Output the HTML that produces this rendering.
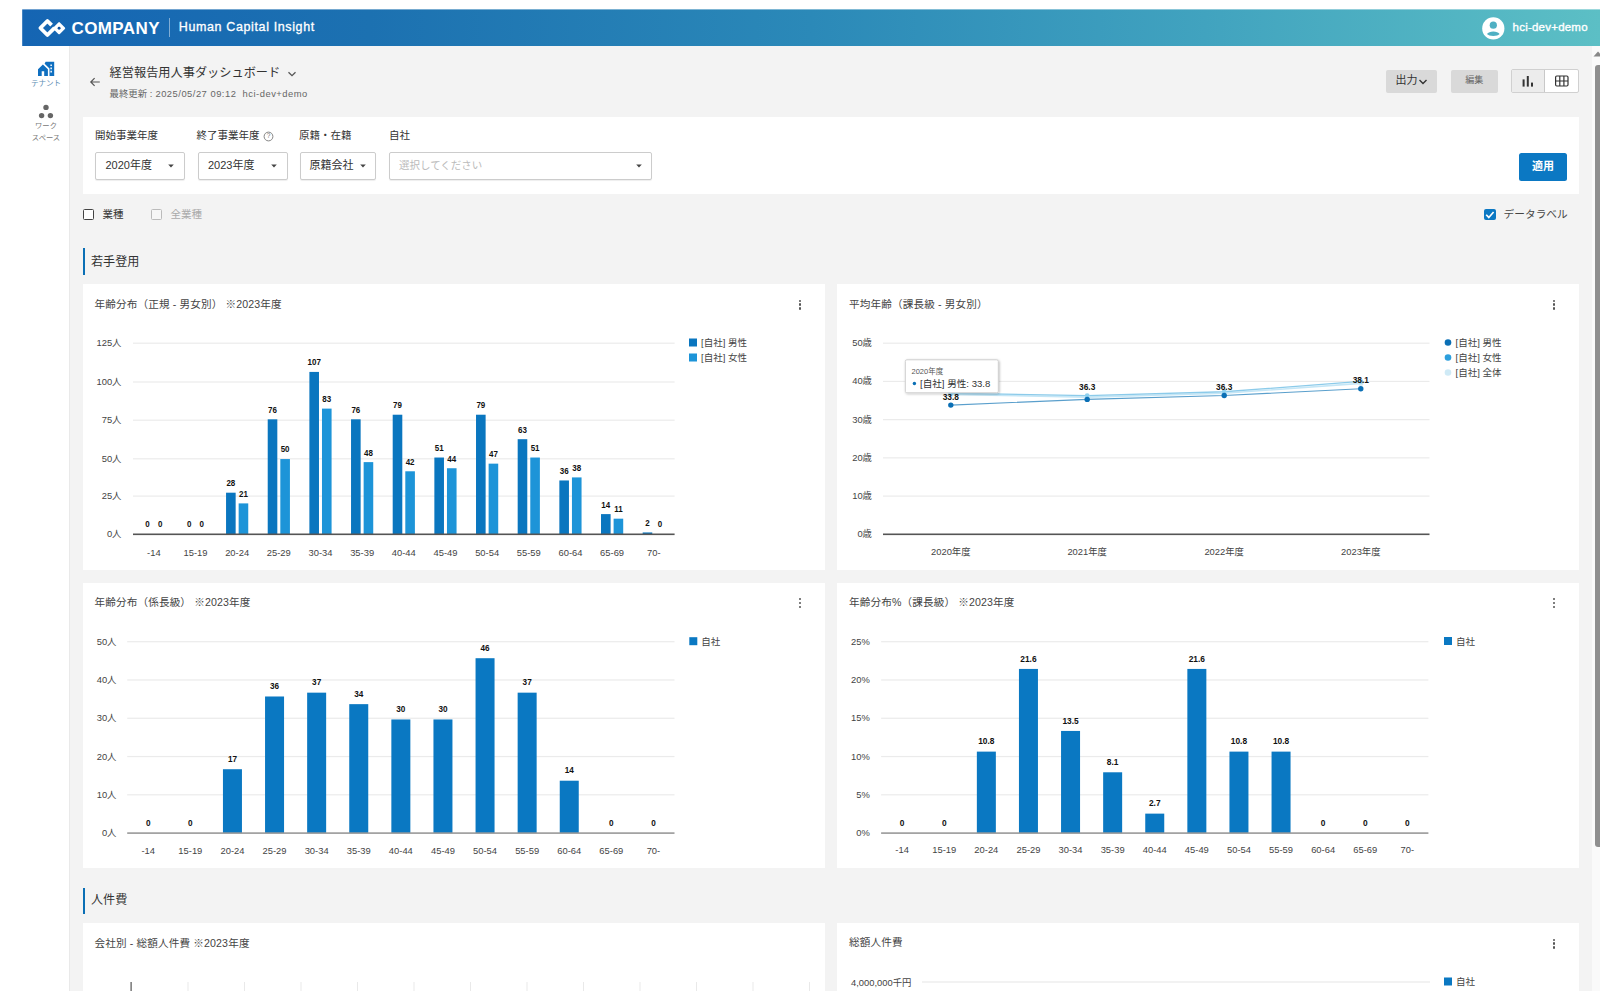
<!DOCTYPE html>
<html lang="ja">
<head>
<meta charset="utf-8">
<title>経営報告用人事ダッシュボード</title>
<style>
*{box-sizing:border-box;margin:0;padding:0}
html,body{width:1600px;height:991px;overflow:hidden;background:#fff}
body{font-family:"Liberation Sans", "Noto Sans CJK JP", sans-serif;color:#333;position:relative;font-size:11px}
.abs,.ch{position:absolute}
.side{left:22px;top:46px;width:48px;height:945px;background:#fff;border-right:1px solid #e9e9e9}
.main{left:70px;top:46px;width:1522px;height:945px;background:#f3f3f3}
.sb{left:1592px;top:46px;width:8px;height:945px;background:#fafafa}
.thumb{left:1594.5px;top:65px;width:5.5px;height:782px;background:#8f8f8f;border-radius:3px 0 0 3px}
.card{background:#fff}
.t{white-space:nowrap;line-height:1}
svg text{font-family:"Liberation Sans", "Noto Sans CJK JP", sans-serif}
.ax{font-size:9.4px;fill:#444}
.dl{font-size:9.3px;font-weight:bold;fill:#111}
.lg{font-size:9.5px;fill:#444}
.tt1{font-size:7.5px;fill:#555}
.tt2{font-size:9.6px;fill:#333}
.sel{background:#fff;border:1px solid #ccc;border-radius:2px;height:28px;box-shadow:0 1px 1px rgba(0,0,0,.07)}
.kb{width:3px}
.kb i{display:block;width:2.4px;height:2.4px;border-radius:50%;background:#555;margin-bottom:1.6px}
</style>
</head>
<body>
<svg width="0" height="0" style="position:absolute"><defs><filter id="sh" x="-10%" y="-20%" width="125%" height="150%"><feDropShadow dx="0.8" dy="0.8" stdDeviation="1" flood-color="#000" flood-opacity="0.25"/></filter></defs></svg>
<svg class="abs" style="left:0;top:0" width="1600" height="56" viewBox="0 0 1600 56"><defs><linearGradient id="hg" x1="0" y1="0" x2="1" y2="0"><stop offset="0" stop-color="#1565b3"/><stop offset="0.22" stop-color="#1c71b1"/><stop offset="0.5" stop-color="#2b89b8"/><stop offset="0.75" stop-color="#41a3bf"/><stop offset="1" stop-color="#5cbfc5"/></linearGradient></defs><rect x="22.2" y="9.4" width="1577.8" height="36.7" fill="url(#hg)"/></svg>
<svg class="abs" style="left:36px;top:14px" width="32" height="28" viewBox="36 14 32 28"><path d="M51.6 25.2 L47.4 21 L40.4 28 L47.4 35 L54.6 27.8" fill="none" stroke="#fff" stroke-width="3.8" stroke-linejoin="round" stroke-linecap="butt"/><path d="M59.1 23.2 L64.1 28.2 L59.1 33.2 L54.1 28.2 Z" fill="#fff" stroke="#fff" stroke-width="2.2" stroke-linejoin="round"/><circle cx="59.1" cy="28.3" r="1.45" fill="#0d4f9e"/></svg>
<div class="abs t" style="left:71.5px;top:20px;font-size:17px;font-weight:bold;color:#fff;letter-spacing:.4px">COMPANY</div>
<div class="abs" style="left:169px;top:18px;width:1px;height:19px;background:rgba(255,255,255,.45)"></div>
<div class="abs t" style="left:178.8px;top:21px;font-size:12.5px;color:#fff;letter-spacing:.62px;-webkit-text-stroke:.3px #fff">Human Capital Insight</div>
<svg class="abs" style="left:1481px;top:15.5px" width="25" height="25" viewBox="0 0 25 25"><circle cx="12.3" cy="12.4" r="11.1" fill="#fff"/><circle cx="12.3" cy="9.2" r="3.6" fill="#4fb0c3"/><path d="M6 18 C7.8 14.6 16.8 14.6 18.6 18 C16.8 20.6 7.8 20.6 6 18Z" fill="#4fb0c3"/></svg>
<div class="abs t" style="left:1512.6px;top:21.5px;font-size:11.5px;color:#fff;letter-spacing:.22px;-webkit-text-stroke:.35px #fff">hci-dev+demo</div>

<div class="abs side"></div>
<div class="abs main"></div>
<div class="abs sb"></div>
<div class="abs thumb"></div>
<svg class="abs" style="left:1592px;top:50px" width="8" height="8" viewBox="0 0 8 8"><path d="M1.5 6.5 L6 1.5 L8 3.5 L8 6.5Z" fill="#888"/></svg>

<!-- sidebar icons -->
<svg class="abs" style="left:36px;top:60px" width="20" height="18" viewBox="36 60 20 18"><path d="M38 69.3 L42.9 64.5 L47.9 69.3 V76 H44.2 V71.3 H41.7 V76 H38 Z" fill="#0f6fc0"/><path d="M45.6 61.8 H54.2 V76 H49.5 V68.5 L44.6 63.7 Z M50.4 64.4 h1.5 v1.6 h-1.5z M50.4 67.6 h1.5 v1.6 h-1.5z M50.4 70.8 h1.5 v1.6 h-1.5z" fill="#0f6fc0" fill-rule="evenodd"/></svg>
<div class="abs t" style="left:22px;top:79.6px;width:48px;text-align:center;font-size:7.5px;color:#5f8fb5">テナント</div>
<svg class="abs" style="left:37px;top:104px" width="18" height="16" viewBox="0 0 18 16"><circle cx="9" cy="3.4" r="2.7" fill="#666"/><circle cx="4.6" cy="11.6" r="2.7" fill="#666"/><circle cx="13.4" cy="11.6" r="2.7" fill="#666"/></svg>
<div class="abs t" style="left:22px;top:122.3px;width:48px;text-align:center;font-size:7.3px;color:#777">ワーク</div>
<div class="abs t" style="left:22px;top:134.2px;width:48px;text-align:center;font-size:7.3px;color:#777">スペース</div>

<!-- title row -->
<svg class="abs" style="left:89px;top:76px" width="12" height="12" viewBox="0 0 12 12"><path d="M10.8 6 H2 M5.6 2.2 L1.8 6 L5.6 9.8" fill="none" stroke="#555" stroke-width="1.2"/></svg>
<div class="abs t" style="left:109.6px;top:67px;font-size:12.2px;color:#333">経営報告用人事ダッシュボード</div>
<svg class="abs" style="left:287px;top:70px" width="10" height="8" viewBox="0 0 10 8"><path d="M1.5 2.2 L5 5.6 L8.5 2.2" fill="none" stroke="#555" stroke-width="1.3"/></svg>
<div class="abs t" style="left:109.6px;top:89.2px;font-size:9.4px;color:#666">最終更新 :<span style="letter-spacing:.5px"> 2025/05/27 09:12&nbsp; hci-dev+demo</span></div>

<!-- top-right buttons -->
<div class="abs" style="left:1386px;top:69.5px;width:51px;height:23.5px;background:#d9d9d9;border-radius:2px"></div>
<div class="abs t" style="left:1395.5px;top:75px;font-size:11px;color:#333">出力</div>
<svg class="abs" style="left:1418px;top:78px" width="10" height="8" viewBox="0 0 10 8"><path d="M1.5 2 L5 5.5 L8.5 2" fill="none" stroke="#333" stroke-width="1.4"/></svg>
<div class="abs" style="left:1450.5px;top:69.5px;width:47.5px;height:23.5px;background:#d9d9d9;border-radius:2px"></div>
<div class="abs t" style="left:1450.5px;top:76px;width:47.5px;text-align:center;font-size:9px;color:#666">編集</div>
<div class="abs" style="left:1511px;top:68.5px;width:67.5px;height:24.5px;background:#fff;border:1px solid #d0d0d0;border-radius:2px"></div>
<div class="abs" style="left:1512px;top:69.5px;width:32.5px;height:22.5px;background:#ececec;border-right:1px solid #c8c8c8"></div>
<svg class="abs" style="left:1521px;top:75px" width="14" height="13" viewBox="0 0 14 13"><rect x="1.6" y="4.4" width="2" height="7.2" fill="#333"/><rect x="5.8" y="1" width="2" height="10.6" fill="#333"/><rect x="10" y="7.6" width="2" height="4" fill="#333"/></svg>
<svg class="abs" style="left:1554px;top:74px" width="16" height="14" viewBox="0 0 16 14"><rect x="1.6" y="2" width="12.4" height="10" rx="1.2" fill="none" stroke="#333" stroke-width="1.2"/><path d="M1.6 7 H14 M5.8 2 V12 M9.9 2 V12" stroke="#333" stroke-width="1.2" fill="none"/></svg>

<!-- filter panel -->
<div class="abs card" style="left:83px;top:116.5px;width:1496px;height:77.5px"></div>
<div class="abs t" style="left:95px;top:129.5px;font-size:10.5px;color:#333">開始事業年度</div>
<div class="abs t" style="left:196.5px;top:129.5px;font-size:10.5px;color:#333">終了事業年度</div>
<svg class="abs" style="left:263px;top:130.5px" width="11" height="11" viewBox="0 0 11 11"><circle cx="5.5" cy="5.5" r="4.4" fill="none" stroke="#777" stroke-width="0.9"/></svg>
<div class="abs t" style="left:263px;top:132.5px;width:11px;text-align:center;font-size:6.5px;color:#777">?</div>
<div class="abs t" style="left:299px;top:129.5px;font-size:10.5px;color:#333">原籍・在籍</div>
<div class="abs t" style="left:389px;top:129.5px;font-size:10.5px;color:#333">自社</div>

<div class="abs sel" style="left:95px;top:151.5px;width:90px"></div>
<div class="abs t" style="left:105.5px;top:159.5px;font-size:11px;color:#333">2020年度</div>
<div class="abs sel" style="left:197.5px;top:151.5px;width:90px"></div>
<div class="abs t" style="left:208px;top:159.5px;font-size:11px;color:#333">2023年度</div>
<div class="abs sel" style="left:299.5px;top:151.5px;width:76px"></div>
<div class="abs t" style="left:309.5px;top:159.5px;font-size:11px;color:#333">原籍会社</div>
<div class="abs sel" style="left:389px;top:151.5px;width:263px"></div>
<div class="abs t" style="left:399px;top:159.5px;font-size:10.5px;color:#bbb">選択してください</div>
<svg class="abs" style="left:167px;top:163px" width="8" height="6" viewBox="0 0 8 6"><path d="M1.2 1.5 H6.8 L4 4.6Z" fill="#444"/></svg>
<svg class="abs" style="left:270px;top:163px" width="8" height="6" viewBox="0 0 8 6"><path d="M1.2 1.5 H6.8 L4 4.6Z" fill="#444"/></svg>
<svg class="abs" style="left:359px;top:163px" width="8" height="6" viewBox="0 0 8 6"><path d="M1.2 1.5 H6.8 L4 4.6Z" fill="#444"/></svg>
<svg class="abs" style="left:635px;top:163px" width="8" height="6" viewBox="0 0 8 6"><path d="M1.2 1.5 H6.8 L4 4.6Z" fill="#444"/></svg>
<div class="abs" style="left:1519px;top:152.5px;width:48px;height:28.5px;background:#0b78c3;border-radius:2.5px"></div>
<div class="abs t" style="left:1519px;top:161px;width:48px;text-align:center;font-size:11px;font-weight:bold;color:#fff">適用</div>

<!-- checkbox row -->
<div class="abs" style="left:82.5px;top:208.5px;width:11px;height:11px;border:1.3px solid #444;border-radius:1.5px;background:#fff"></div>
<div class="abs t" style="left:102.5px;top:208.5px;font-size:10.5px;color:#333">業種</div>
<div class="abs" style="left:151px;top:209px;width:10.5px;height:10.5px;border:1px solid #bbb;border-radius:1.5px;background:#f6f6f6"></div>
<div class="abs t" style="left:170.5px;top:208.5px;font-size:10.5px;color:#aaa">全業種</div>
<div class="abs" style="left:1484px;top:208.5px;width:11.5px;height:11.5px;border-radius:2px;background:#0b78c3"></div>
<svg class="abs" style="left:1484px;top:208.5px" width="11.5" height="11.5" viewBox="0 0 12 12"><path d="M2.3 6 L5 8.8 L10 3.2" fill="none" stroke="#fff" stroke-width="1.7"/></svg>
<div class="abs t" style="left:1503.6px;top:208.5px;font-size:10.7px;color:#444">データラベル</div>

<!-- section 1 -->
<div class="abs" style="left:82.5px;top:248px;width:2.5px;height:27px;background:#0a6fb5"></div>
<div class="abs t" style="left:91px;top:255.8px;font-size:12.1px;color:#333">若手登用</div>

<div class="abs card" style="left:83px;top:284px;width:742px;height:286px"></div>
<div class="abs card" style="left:837px;top:284px;width:742px;height:286px"></div>
<div class="abs card" style="left:83px;top:582.5px;width:742px;height:285.5px"></div>
<div class="abs card" style="left:837px;top:582.5px;width:742px;height:285.5px"></div>
<div class="abs t" style="left:94.5px;top:298.5px;font-size:10.6px;letter-spacing:.14px;color:#444">年齢分布（正規 - 男女別） ※2023年度</div>
<div class="abs t" style="left:849px;top:298.5px;font-size:10.6px;letter-spacing:.14px;color:#444">平均年齢（課長級 - 男女別）</div>
<div class="abs t" style="left:94.5px;top:597px;font-size:10.6px;letter-spacing:.14px;color:#444">年齢分布（係長級） ※2023年度</div>
<div class="abs t" style="left:849px;top:597px;font-size:10.6px;letter-spacing:.14px;color:#444">年齢分布%（課長級） ※2023年度</div>
<div class="abs kb" style="left:798.6px;top:299.5px"><i></i><i></i><i></i></div>
<div class="abs kb" style="left:1552.8px;top:299.5px"><i></i><i></i><i></i></div>
<div class="abs kb" style="left:798.6px;top:598px"><i></i><i></i><i></i></div>
<div class="abs kb" style="left:1552.8px;top:598px"><i></i><i></i><i></i></div>
<svg class="ch" style="left:83px;top:320px" width="742" height="250" viewBox="83 320 742 250">
<text class="ax" x="121.5" y="537" text-anchor="end">0人</text>
<rect x="133.0" y="495.50" width="541.60" height="1.2" fill="#ebebeb"/>
<text class="ax" x="121.5" y="499" text-anchor="end">25人</text>
<rect x="133.0" y="458.20" width="541.60" height="1.2" fill="#ebebeb"/>
<text class="ax" x="121.5" y="462" text-anchor="end">50人</text>
<rect x="133.0" y="419.60" width="541.60" height="1.2" fill="#ebebeb"/>
<text class="ax" x="121.5" y="423" text-anchor="end">75人</text>
<rect x="133.0" y="381.40" width="541.60" height="1.2" fill="#ebebeb"/>
<text class="ax" x="121.5" y="385" text-anchor="end">100人</text>
<rect x="133.0" y="342.60" width="541.60" height="1.2" fill="#ebebeb"/>
<text class="ax" x="121.5" y="346" text-anchor="end">125人</text>
<text class="ax" x="153.83" y="555.8" text-anchor="middle">-14</text>
<text class="dl" transform="translate(147.53,527.00) scale(0.86,1)" text-anchor="middle">0</text>
<text class="dl" transform="translate(160.13,527.00) scale(0.86,1)" text-anchor="middle">0</text>
<text class="ax" x="195.49" y="555.8" text-anchor="middle">15-19</text>
<text class="dl" transform="translate(189.19,527.00) scale(0.86,1)" text-anchor="middle">0</text>
<text class="dl" transform="translate(201.79,527.00) scale(0.86,1)" text-anchor="middle">0</text>
<text class="ax" x="237.15" y="555.8" text-anchor="middle">20-24</text>
<rect x="226.05" y="492.69" width="9.6" height="41.61" fill="#0a76bf"/>
<text class="dl" transform="translate(230.85,486.09) scale(0.86,1)" text-anchor="middle">28</text>
<rect x="238.65" y="503.40" width="9.6" height="30.90" fill="#1d94d8"/>
<text class="dl" transform="translate(243.45,496.80) scale(0.86,1)" text-anchor="middle">21</text>
<text class="ax" x="278.82" y="555.8" text-anchor="middle">25-29</text>
<rect x="267.72" y="419.31" width="9.6" height="114.99" fill="#0a76bf"/>
<text class="dl" transform="translate(272.52,412.71) scale(0.86,1)" text-anchor="middle">76</text>
<rect x="280.32" y="459.06" width="9.6" height="75.24" fill="#1d94d8"/>
<text class="dl" transform="translate(285.12,452.46) scale(0.86,1)" text-anchor="middle">50</text>
<text class="ax" x="320.48" y="555.8" text-anchor="middle">30-34</text>
<rect x="309.38" y="371.92" width="9.6" height="162.38" fill="#0a76bf"/>
<text class="dl" transform="translate(314.18,365.32) scale(0.86,1)" text-anchor="middle">107</text>
<rect x="321.98" y="408.61" width="9.6" height="125.69" fill="#1d94d8"/>
<text class="dl" transform="translate(326.78,402.01) scale(0.86,1)" text-anchor="middle">83</text>
<text class="ax" x="362.14" y="555.8" text-anchor="middle">35-39</text>
<rect x="351.04" y="419.31" width="9.6" height="114.99" fill="#0a76bf"/>
<text class="dl" transform="translate(355.84,412.71) scale(0.86,1)" text-anchor="middle">76</text>
<rect x="363.64" y="462.12" width="9.6" height="72.18" fill="#1d94d8"/>
<text class="dl" transform="translate(368.44,455.52) scale(0.86,1)" text-anchor="middle">48</text>
<text class="ax" x="403.80" y="555.8" text-anchor="middle">40-44</text>
<rect x="392.70" y="414.72" width="9.6" height="119.58" fill="#0a76bf"/>
<text class="dl" transform="translate(397.50,408.12) scale(0.86,1)" text-anchor="middle">79</text>
<rect x="405.30" y="471.29" width="9.6" height="63.01" fill="#1d94d8"/>
<text class="dl" transform="translate(410.10,464.69) scale(0.86,1)" text-anchor="middle">42</text>
<text class="ax" x="445.46" y="555.8" text-anchor="middle">45-49</text>
<rect x="434.36" y="457.53" width="9.6" height="76.77" fill="#0a76bf"/>
<text class="dl" transform="translate(439.16,450.93) scale(0.86,1)" text-anchor="middle">51</text>
<rect x="446.96" y="468.23" width="9.6" height="66.07" fill="#1d94d8"/>
<text class="dl" transform="translate(451.76,461.63) scale(0.86,1)" text-anchor="middle">44</text>
<text class="ax" x="487.12" y="555.8" text-anchor="middle">50-54</text>
<rect x="476.02" y="414.72" width="9.6" height="119.58" fill="#0a76bf"/>
<text class="dl" transform="translate(480.82,408.12) scale(0.86,1)" text-anchor="middle">79</text>
<rect x="488.62" y="463.65" width="9.6" height="70.65" fill="#1d94d8"/>
<text class="dl" transform="translate(493.42,457.05) scale(0.86,1)" text-anchor="middle">47</text>
<text class="ax" x="528.78" y="555.8" text-anchor="middle">55-59</text>
<rect x="517.68" y="439.19" width="9.6" height="95.11" fill="#0a76bf"/>
<text class="dl" transform="translate(522.48,432.59) scale(0.86,1)" text-anchor="middle">63</text>
<rect x="530.28" y="457.53" width="9.6" height="76.77" fill="#1d94d8"/>
<text class="dl" transform="translate(535.08,450.93) scale(0.86,1)" text-anchor="middle">51</text>
<text class="ax" x="570.45" y="555.8" text-anchor="middle">60-64</text>
<rect x="559.35" y="480.46" width="9.6" height="53.84" fill="#0a76bf"/>
<text class="dl" transform="translate(564.15,473.86) scale(0.86,1)" text-anchor="middle">36</text>
<rect x="571.95" y="477.41" width="9.6" height="56.89" fill="#1d94d8"/>
<text class="dl" transform="translate(576.75,470.81) scale(0.86,1)" text-anchor="middle">38</text>
<text class="ax" x="612.11" y="555.8" text-anchor="middle">65-69</text>
<rect x="601.01" y="514.10" width="9.6" height="20.20" fill="#0a76bf"/>
<text class="dl" transform="translate(605.81,507.50) scale(0.86,1)" text-anchor="middle">14</text>
<rect x="613.61" y="518.68" width="9.6" height="15.62" fill="#1d94d8"/>
<text class="dl" transform="translate(618.41,512.08) scale(0.86,1)" text-anchor="middle">11</text>
<text class="ax" x="653.77" y="555.8" text-anchor="middle">70-</text>
<rect x="642.67" y="532.44" width="9.6" height="1.86" fill="#0a76bf"/>
<text class="dl" transform="translate(647.47,525.84) scale(0.86,1)" text-anchor="middle">2</text>
<text class="dl" transform="translate(660.07,527.00) scale(0.86,1)" text-anchor="middle">0</text>
<rect x="133.0" y="533.5" width="541.60" height="1.6" fill="#555"/>
<rect x="689" y="338.5" width="8" height="8" fill="#0a76bf"/>
<text class="lg" x="701" y="346.1">[自社] 男性</text>
<rect x="689" y="353.5" width="8" height="8" fill="#1d94d8"/>
<text class="lg" x="701" y="361.1">[自社] 女性</text>
</svg>
<svg class="ch" style="left:837px;top:320px" width="742" height="250" viewBox="837 320 742 250">
<text class="ax" x="872" y="537" text-anchor="end">0歳</text>
<rect x="883" y="495.48" width="546.5" height="1.2" fill="#ebebeb"/>
<text class="ax" x="872" y="499" text-anchor="end">10歳</text>
<rect x="883" y="457.26" width="546.5" height="1.2" fill="#ebebeb"/>
<text class="ax" x="872" y="461" text-anchor="end">20歳</text>
<rect x="883" y="419.04" width="546.5" height="1.2" fill="#ebebeb"/>
<text class="ax" x="872" y="423" text-anchor="end">30歳</text>
<rect x="883" y="380.82" width="546.5" height="1.2" fill="#ebebeb"/>
<text class="ax" x="872" y="384" text-anchor="end">40歳</text>
<rect x="883" y="342.60" width="546.5" height="1.2" fill="#ebebeb"/>
<text class="ax" x="872" y="346" text-anchor="end">50歳</text>
<text class="ax" x="950.80" y="555.3" text-anchor="middle">2020年度</text>
<text class="ax" x="1087.20" y="555.3" text-anchor="middle">2021年度</text>
<text class="ax" x="1224.20" y="555.3" text-anchor="middle">2022年度</text>
<text class="ax" x="1360.80" y="555.3" text-anchor="middle">2023年度</text>
<polyline points="950.80,394.41 1087.20,397.09 1224.20,393.27 1360.80,383.33" fill="none" stroke="#c4e6f6" stroke-width="1.6"/>
<polyline points="950.80,393.27 1087.20,395.56 1224.20,391.74 1360.80,381.42" fill="none" stroke="#8ccbea" stroke-width="1.3"/>
<polyline points="950.80,405.12 1087.20,399.38 1224.20,395.56 1360.80,388.68" fill="none" stroke="#5a9fcc" stroke-width="1.1"/>
<circle cx="950.80" cy="394.41" r="2.6" fill="#cfeaf6"/>
<circle cx="1087.20" cy="397.09" r="2.6" fill="#cfeaf6"/>
<circle cx="1224.20" cy="393.27" r="2.6" fill="#cfeaf6"/>
<circle cx="1360.80" cy="383.33" r="2.6" fill="#cfeaf6"/>
<circle cx="950.80" cy="393.27" r="2.4" fill="#8fd0ee"/>
<circle cx="1087.20" cy="395.56" r="2.4" fill="#8fd0ee"/>
<circle cx="1224.20" cy="391.74" r="2.4" fill="#8fd0ee"/>
<circle cx="1360.80" cy="381.42" r="2.4" fill="#8fd0ee"/>
<circle cx="950.80" cy="405.12" r="2.7" fill="#0a6fb5"/>
<circle cx="1087.20" cy="399.38" r="2.7" fill="#0a6fb5"/>
<circle cx="1224.20" cy="395.56" r="2.7" fill="#0a6fb5"/>
<circle cx="1360.80" cy="388.68" r="2.7" fill="#0a6fb5"/>
<text class="dl" transform="translate(950.80,399.52) scale(0.9,1)" text-anchor="middle">33.8</text>
<text class="dl" transform="translate(1087.20,389.96) scale(0.9,1)" text-anchor="middle">36.3</text>
<text class="dl" transform="translate(1224.20,389.96) scale(0.9,1)" text-anchor="middle">36.3</text>
<text class="dl" transform="translate(1360.80,383.08) scale(0.9,1)" text-anchor="middle">38.1</text>
<rect x="883" y="533.5" width="546.5" height="1.6" fill="#555"/>
<circle cx="1448" cy="342.5" r="3.3" fill="#0a6fb5"/>
<text class="lg" x="1455.5" y="346.1">[自社] 男性</text>
<circle cx="1448" cy="357.5" r="3.3" fill="#2d9fdd"/>
<text class="lg" x="1455.5" y="361.1">[自社] 女性</text>
<circle cx="1448" cy="372.5" r="3.3" fill="#cfeaf6"/>
<text class="lg" x="1455.5" y="376.1">[自社] 全体</text>
<rect x="905.3" y="359.8" width="93" height="33" rx="1.5" fill="#fff" stroke="#cfcfcf" stroke-width="1" filter="url(#sh)"/>
<text class="tt1" x="911.5" y="374">2020年度</text>
<circle cx="914.4" cy="383.5" r="1.7" fill="#0a6fb5"/>
<text class="tt2" x="920" y="386.8">[自社] 男性: 33.8</text>
</svg>
<svg class="ch" style="left:83px;top:618px" width="742" height="250" viewBox="83 618 742 250">
<text class="ax" x="116.5" y="836" text-anchor="end">0人</text>
<rect x="127.2" y="794.22" width="547.30" height="1.2" fill="#ebebeb"/>
<text class="ax" x="116.5" y="798" text-anchor="end">10人</text>
<rect x="127.2" y="755.94" width="547.30" height="1.2" fill="#ebebeb"/>
<text class="ax" x="116.5" y="760" text-anchor="end">20人</text>
<rect x="127.2" y="717.66" width="547.30" height="1.2" fill="#ebebeb"/>
<text class="ax" x="116.5" y="721" text-anchor="end">30人</text>
<rect x="127.2" y="679.38" width="547.30" height="1.2" fill="#ebebeb"/>
<text class="ax" x="116.5" y="683" text-anchor="end">40人</text>
<rect x="127.2" y="641.10" width="547.30" height="1.2" fill="#ebebeb"/>
<text class="ax" x="116.5" y="645" text-anchor="end">50人</text>
<text class="ax" x="148.25" y="853.5" text-anchor="middle">-14</text>
<text class="dl" transform="translate(148.25,825.80) scale(0.88,1)" text-anchor="middle">0</text>
<text class="ax" x="190.35" y="853.5" text-anchor="middle">15-19</text>
<text class="dl" transform="translate(190.35,825.80) scale(0.88,1)" text-anchor="middle">0</text>
<text class="ax" x="232.45" y="853.5" text-anchor="middle">20-24</text>
<rect x="222.95" y="769.22" width="19" height="63.88" fill="#0a78c2"/>
<text class="dl" transform="translate(232.45,761.62) scale(0.88,1)" text-anchor="middle">17</text>
<text class="ax" x="274.55" y="853.5" text-anchor="middle">25-29</text>
<rect x="265.05" y="696.49" width="19" height="136.61" fill="#0a78c2"/>
<text class="dl" transform="translate(274.55,688.89) scale(0.88,1)" text-anchor="middle">36</text>
<text class="ax" x="316.65" y="853.5" text-anchor="middle">30-34</text>
<rect x="307.15" y="692.66" width="19" height="140.44" fill="#0a78c2"/>
<text class="dl" transform="translate(316.65,685.06) scale(0.88,1)" text-anchor="middle">37</text>
<text class="ax" x="358.75" y="853.5" text-anchor="middle">35-39</text>
<rect x="349.25" y="704.15" width="19" height="128.95" fill="#0a78c2"/>
<text class="dl" transform="translate(358.75,696.55) scale(0.88,1)" text-anchor="middle">34</text>
<text class="ax" x="400.85" y="853.5" text-anchor="middle">40-44</text>
<rect x="391.35" y="719.46" width="19" height="113.64" fill="#0a78c2"/>
<text class="dl" transform="translate(400.85,711.86) scale(0.88,1)" text-anchor="middle">30</text>
<text class="ax" x="442.95" y="853.5" text-anchor="middle">45-49</text>
<rect x="433.45" y="719.46" width="19" height="113.64" fill="#0a78c2"/>
<text class="dl" transform="translate(442.95,711.86) scale(0.88,1)" text-anchor="middle">30</text>
<text class="ax" x="485.05" y="853.5" text-anchor="middle">50-54</text>
<rect x="475.55" y="658.21" width="19" height="174.89" fill="#0a78c2"/>
<text class="dl" transform="translate(485.05,650.61) scale(0.88,1)" text-anchor="middle">46</text>
<text class="ax" x="527.15" y="853.5" text-anchor="middle">55-59</text>
<rect x="517.65" y="692.66" width="19" height="140.44" fill="#0a78c2"/>
<text class="dl" transform="translate(527.15,685.06) scale(0.88,1)" text-anchor="middle">37</text>
<text class="ax" x="569.25" y="853.5" text-anchor="middle">60-64</text>
<rect x="559.75" y="780.71" width="19" height="52.39" fill="#0a78c2"/>
<text class="dl" transform="translate(569.25,773.11) scale(0.88,1)" text-anchor="middle">14</text>
<text class="ax" x="611.35" y="853.5" text-anchor="middle">65-69</text>
<text class="dl" transform="translate(611.35,825.80) scale(0.88,1)" text-anchor="middle">0</text>
<text class="ax" x="653.45" y="853.5" text-anchor="middle">70-</text>
<text class="dl" transform="translate(653.45,825.80) scale(0.88,1)" text-anchor="middle">0</text>
<rect x="127.2" y="832.3000000000001" width="547.30" height="1.6" fill="#999"/>
<rect x="689.3" y="637.2" width="8" height="8" fill="#0a78c2"/>
<text class="lg" x="701.3" y="644.8000000000001">自社</text>
</svg>
<svg class="ch" style="left:837px;top:618px" width="742" height="250" viewBox="837 618 742 250">
<text class="ax" x="869.8" y="836" text-anchor="end">0%</text>
<rect x="881.1" y="794.22" width="547.30" height="1.2" fill="#ebebeb"/>
<text class="ax" x="869.8" y="798" text-anchor="end">5%</text>
<rect x="881.1" y="755.94" width="547.30" height="1.2" fill="#ebebeb"/>
<text class="ax" x="869.8" y="760" text-anchor="end">10%</text>
<rect x="881.1" y="717.66" width="547.30" height="1.2" fill="#ebebeb"/>
<text class="ax" x="869.8" y="721" text-anchor="end">15%</text>
<rect x="881.1" y="679.38" width="547.30" height="1.2" fill="#ebebeb"/>
<text class="ax" x="869.8" y="683" text-anchor="end">20%</text>
<rect x="881.1" y="641.10" width="547.30" height="1.2" fill="#ebebeb"/>
<text class="ax" x="869.8" y="645" text-anchor="end">25%</text>
<text class="ax" x="902.15" y="852.6" text-anchor="middle">-14</text>
<text class="dl" transform="translate(902.15,825.80) scale(0.9,1)" text-anchor="middle">0</text>
<text class="ax" x="944.25" y="852.6" text-anchor="middle">15-19</text>
<text class="dl" transform="translate(944.25,825.80) scale(0.9,1)" text-anchor="middle">0</text>
<text class="ax" x="986.35" y="852.6" text-anchor="middle">20-24</text>
<rect x="976.85" y="751.62" width="19" height="81.48" fill="#0a78c2"/>
<text class="dl" transform="translate(986.35,744.42) scale(0.9,1)" text-anchor="middle">10.8</text>
<text class="ax" x="1028.45" y="852.6" text-anchor="middle">25-29</text>
<rect x="1018.95" y="668.93" width="19" height="164.17" fill="#0a78c2"/>
<text class="dl" transform="translate(1028.45,661.73) scale(0.9,1)" text-anchor="middle">21.6</text>
<text class="ax" x="1070.55" y="852.6" text-anchor="middle">30-34</text>
<rect x="1061.05" y="730.94" width="19" height="102.16" fill="#0a78c2"/>
<text class="dl" transform="translate(1070.55,723.74) scale(0.9,1)" text-anchor="middle">13.5</text>
<text class="ax" x="1112.65" y="852.6" text-anchor="middle">35-39</text>
<rect x="1103.15" y="772.29" width="19" height="60.81" fill="#0a78c2"/>
<text class="dl" transform="translate(1112.65,765.09) scale(0.9,1)" text-anchor="middle">8.1</text>
<text class="ax" x="1154.75" y="852.6" text-anchor="middle">40-44</text>
<rect x="1145.25" y="813.63" width="19" height="19.47" fill="#0a78c2"/>
<text class="dl" transform="translate(1154.75,806.43) scale(0.9,1)" text-anchor="middle">2.7</text>
<text class="ax" x="1196.85" y="852.6" text-anchor="middle">45-49</text>
<rect x="1187.35" y="668.93" width="19" height="164.17" fill="#0a78c2"/>
<text class="dl" transform="translate(1196.85,661.73) scale(0.9,1)" text-anchor="middle">21.6</text>
<text class="ax" x="1238.95" y="852.6" text-anchor="middle">50-54</text>
<rect x="1229.45" y="751.62" width="19" height="81.48" fill="#0a78c2"/>
<text class="dl" transform="translate(1238.95,744.42) scale(0.9,1)" text-anchor="middle">10.8</text>
<text class="ax" x="1281.05" y="852.6" text-anchor="middle">55-59</text>
<rect x="1271.55" y="751.62" width="19" height="81.48" fill="#0a78c2"/>
<text class="dl" transform="translate(1281.05,744.42) scale(0.9,1)" text-anchor="middle">10.8</text>
<text class="ax" x="1323.15" y="852.6" text-anchor="middle">60-64</text>
<text class="dl" transform="translate(1323.15,825.80) scale(0.9,1)" text-anchor="middle">0</text>
<text class="ax" x="1365.25" y="852.6" text-anchor="middle">65-69</text>
<text class="dl" transform="translate(1365.25,825.80) scale(0.9,1)" text-anchor="middle">0</text>
<text class="ax" x="1407.35" y="852.6" text-anchor="middle">70-</text>
<text class="dl" transform="translate(1407.35,825.80) scale(0.9,1)" text-anchor="middle">0</text>
<rect x="881.1" y="832.3000000000001" width="547.30" height="1.6" fill="#999"/>
<rect x="1444" y="637" width="8" height="8" fill="#0a78c2"/>
<text class="lg" x="1456" y="644.6">自社</text>
</svg>

<!-- section 2 -->
<div class="abs" style="left:82.5px;top:887.5px;width:2.5px;height:26px;background:#0a6fb5"></div>
<div class="abs t" style="left:91px;top:894.3px;font-size:12.1px;color:#333">人件費</div>
<div class="abs card" style="left:83px;top:923px;width:742px;height:68px"></div>
<div class="abs card" style="left:837px;top:923px;width:742px;height:68px"></div>
<div class="abs t" style="left:94.5px;top:937.5px;font-size:10.6px;letter-spacing:.14px;color:#444">会社別 - 総額人件費 ※2023年度</div>
<div class="abs t" style="left:849px;top:937px;font-size:10.6px;letter-spacing:.14px;color:#444">総額人件費</div>
<div class="abs kb" style="left:1552.8px;top:938.5px"><i></i><i></i><i></i></div>
<svg class="ch" style="left:83px;top:970px" width="742" height="21" viewBox="83 970 742 21">
<rect x="130.5" y="982" width="1.2" height="9" fill="#555"/>
<rect x="187.5" y="982" width="1" height="9" fill="#e9e9e9"/><rect x="244.0" y="982" width="1" height="9" fill="#e9e9e9"/><rect x="300.5" y="982" width="1" height="9" fill="#e9e9e9"/><rect x="357.0" y="982" width="1" height="9" fill="#e9e9e9"/><rect x="413.5" y="982" width="1" height="9" fill="#e9e9e9"/><rect x="470.0" y="982" width="1" height="9" fill="#e9e9e9"/><rect x="526.5" y="982" width="1" height="9" fill="#e9e9e9"/><rect x="583.0" y="982" width="1" height="9" fill="#e9e9e9"/><rect x="639.5" y="982" width="1" height="9" fill="#e9e9e9"/><rect x="696.0" y="982" width="1" height="9" fill="#e9e9e9"/><rect x="752.5" y="982" width="1" height="9" fill="#e9e9e9"/><rect x="809.0" y="982" width="1" height="9" fill="#e9e9e9"/>
</svg>
<svg class="ch" style="left:837px;top:970px" width="742" height="21" viewBox="837 970 742 21">
<text class="ax" x="851" y="986">4,000,000千円</text>
<rect x="922" y="981.5" width="508" height="1" fill="#e6e6e6"/>
<rect x="1444" y="977.5" width="8" height="8" fill="#0a78c2"/>
<text class="lg" x="1456" y="985.1">自社</text>
</svg>
</body>
</html>
